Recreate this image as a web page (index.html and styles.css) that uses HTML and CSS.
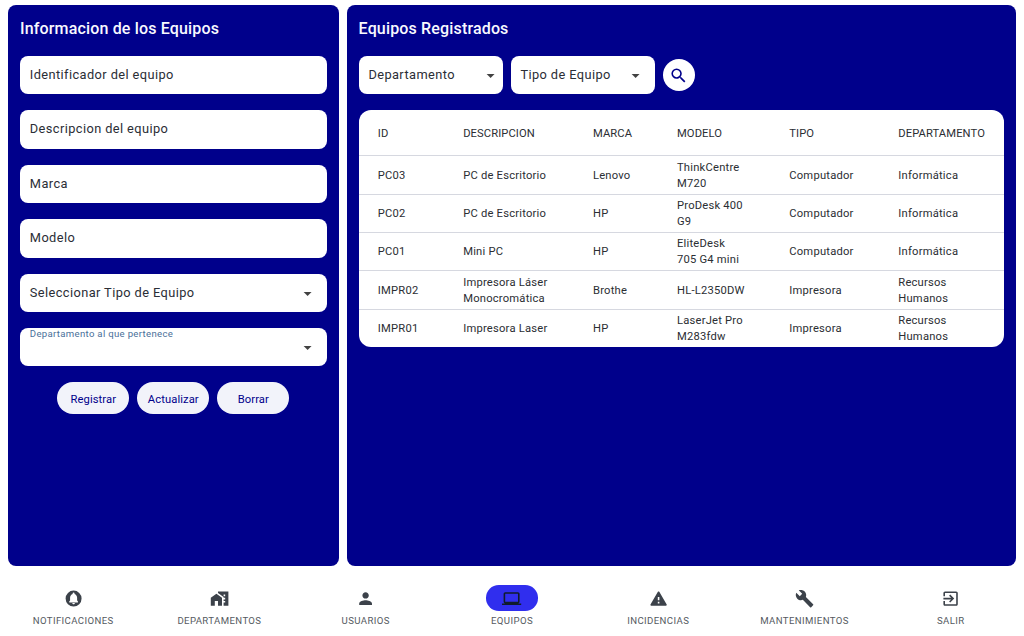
FILE: index.html
```html
<!DOCTYPE html>
<html lang="es">
<head>
<meta charset="utf-8">
<title>Equipos</title>
<link rel="stylesheet" href="styles.css">
</head>
<body>
<main class="panels">
  <section class="panel form-panel">
    <h1 class="title">Informacion de los Equipos</h1>
    <form class="form">
      <div class="field">Identificador del equipo</div>
      <div class="field">Descripcion del equipo</div>
      <div class="field">Marca</div>
      <div class="field">Modelo</div>
      <div class="field select">Seleccionar Tipo de Equipo<svg class="arrow" viewBox="0 0 24 24"><path d="M7 10l5 5 5-5z"/></svg></div>
      <div class="field select floating"><span class="float-label">Departamento al que pertenece</span><svg class="arrow" viewBox="0 0 24 24"><path d="M7 10l5 5 5-5z"/></svg></div>
      <div class="actions">
        <button type="button" class="btn">Registrar</button>
        <button type="button" class="btn">Actualizar</button>
        <button type="button" class="btn">Borrar</button>
      </div>
    </form>
  </section>
  <section class="panel list-panel">
    <h1 class="title">Equipos Registrados</h1>
    <div class="filters">
      <div class="field select filter dept">Departamento<svg class="arrow" viewBox="0 0 24 24"><path d="M7 10l5 5 5-5z"/></svg></div>
      <div class="field select filter type">Tipo de Equipo<svg class="arrow" viewBox="0 0 24 24"><path d="M7 10l5 5 5-5z"/></svg></div>
      <button type="button" class="search" aria-label="Buscar"><svg class="icon" viewBox="0 0 24 24"><path d="M15.5 14h-.79l-.28-.27A6.47 6.47 0 0 0 16 9.5 6.5 6.5 0 1 0 9.5 16c1.61 0 3.09-.59 4.23-1.57l.27.28v.79l5 4.99L20.49 19l-4.99-5zm-6 0C7.01 14 5 11.99 5 9.5S7.01 5 9.5 5 14 7.01 14 9.5 11.99 14 9.5 14z"/></svg></button>
    </div>
    <div class="table">
      <div class="row head"><span>ID</span><span>DESCRIPCION</span><span>MARCA</span><span>MODELO</span><span>TIPO</span><span>DEPARTAMENTO</span></div>
      <div class="row"><span>PC03</span><span>PC de Escritorio</span><span>Lenovo</span><span>ThinkCentre<br>M720</span><span>Computador</span><span>Informática</span></div>
      <div class="row"><span>PC02</span><span>PC de Escritorio</span><span>HP</span><span>ProDesk 400<br>G9</span><span>Computador</span><span>Informática</span></div>
      <div class="row"><span>PC01</span><span>Mini PC</span><span>HP</span><span>EliteDesk<br>705 G4 mini</span><span>Computador</span><span>Informática</span></div>
      <div class="row"><span>IMPR02</span><span>Impresora Láser<br>Monocromática</span><span>Brothe</span><span>HL-L2350DW</span><span>Impresora</span><span>Recursos<br>Humanos</span></div>
      <div class="row"><span>IMPR01</span><span>Impresora Laser</span><span>HP</span><span>LaserJet Pro<br>M283fdw</span><span>Impresora</span><span>Recursos<br>Humanos</span></div>
    </div>
  </section>
</main>
<nav class="nav">
  <a class="nav-item"><span class="pill"><svg class="icon" viewBox="0 0 24 24"><path fill-rule="evenodd" d="M12 2a10 10 0 1 0 0 20 10 10 0 0 0 0-20zM12 19.2c-.9 0-1.6-.7-1.6-1.6h3.2c0 .9-.7 1.6-1.6 1.6zM6.6 17v-1.6l1-1V11c0-2.5 1.3-4.3 3.2-4.9V5.5c0-.7.5-1.2 1.2-1.2s1.2.5 1.2 1.2v.6c1.9.6 3.2 2.4 3.2 4.9v3.4l1 1V17z"/></svg></span>NOTIFICACIONES</a>
  <a class="nav-item"><span class="pill"><svg class="icon" viewBox="0 0 24 24"><path d="M1 11v10h5v-6h4v6h5V11L8 6z"/><path d="M10 3v1.97l7 5V11h2v2h-2v2h2v2h-2v4h6V3H10zm9 6h-2V7h2v2z"/></svg></span>DEPARTAMENTOS</a>
  <a class="nav-item"><span class="pill"><svg class="icon" viewBox="0 0 24 24"><path d="M12 12c2.21 0 4-1.79 4-4s-1.79-4-4-4-4 1.79-4 4 1.79 4 4 4zm0 2c-2.67 0-8 1.34-8 4v2h16v-2c0-2.66-5.33-4-8-4z"/></svg></span>USUARIOS</a>
  <a class="nav-item active"><span class="pill"><svg class="icon" viewBox="0 0 24 24"><path d="M20 18c1.1 0 1.99-.9 1.99-2L22 6c0-1.1-.9-2-2-2H4c-1.1 0-2 .9-2 2v10c0 1.1.9 2 2 2H0v2h24v-2h-4zM4 6h16v10H4V6z"/></svg></span>EQUIPOS</a>
  <a class="nav-item"><span class="pill"><svg class="icon" viewBox="0 0 24 24"><path d="M2.73 21h18.53c.77 0 1.25-.83.87-1.5l-9.27-16c-.39-.67-1.35-.67-1.73 0l-9.27 16c-.38.67.1 1.5.87 1.5zM13 18h-2v-2h2v2zm0-4h-2v-4h2v4z"/></svg></span>INCIDENCIAS</a>
  <a class="nav-item"><span class="pill"><svg class="icon" viewBox="0 0 24 24"><path d="M22.7 19l-9.1-9.1c.9-2.3.4-5-1.5-6.9-2-2-5-2.4-7.4-1.3L9 6 6 9 1.6 4.7C.4 7.1.9 10.1 2.9 12.1c1.9 1.9 4.6 2.4 6.9 1.5l9.1 9.1c.4.4 1 .4 1.4 0l2.3-2.3c.5-.4.5-1.1.1-1.4z"/></svg></span>MANTENIMIENTOS</a>
  <a class="nav-item"><span class="pill"><svg class="icon" viewBox="0 0 24 24"><path d="M10.09 15.59L11.5 17l5-5-5-5-1.41 1.41L12.67 11H3v2h9.67l-2.58 2.59zM19 3H5c-1.11 0-2 .9-2 2v4h2V5h14v14H5v-4H3v4c0 1.1.89 2 2 2h14c1.1 0 2-.9 2-2V5c0-1.1-.9-2-2-2z"/></svg></span>SALIR</a>
</nav>
</body>
</html>
```
FILE: styles.css
```css
* { box-sizing: border-box; }
body {
  margin: 0;
  width: 1024px;
  height: 636px;
  overflow: hidden;
  background: #fff;
  color: #2b2e33;
  font-family: Roboto, "Liberation Sans", sans-serif;
  display: flex;
  flex-direction: column;
}
.panels {
  display: grid;
  grid-template-columns: 330.6px 1fr;
  gap: 8px;
  padding: 5px 8px 0;
  height: 566px;
}
.panel {
  background: #00008b;
  border-radius: 8px;
  padding: 12px 12px 0;
}
.title {
  margin: 0 0 16px;
  height: 23px;
  line-height: 23px;
  color: #f8f9ff;
  font-size: 16px;
  font-weight: 500;
  letter-spacing: 0.16px;
}
.form { display: flex; flex-direction: column; gap: 16px; }
.field {
  height: 38.4px;
  padding: 0 9.8px;
  border-radius: 8px;
  background: #fff;
  color: #2b2e36;
  font-size: 12.8px;
  letter-spacing: 0.41px;
  line-height: 38.8px;
  white-space: nowrap;
}
.select { display: flex; justify-content: space-between; }
.arrow { width: 19.2px; height: 19.2px; margin-top: 10px; fill: #424242; flex: none; }
.floating { position: relative; }
.floating .arrow { margin-left: auto; }
.float-label {
  position: absolute;
  left: 9.8px;
  top: 0;
  color: #4a709a;
  font-size: 9.6px;
  letter-spacing: 0.31px;
  line-height: 12px;
}
.actions { display: flex; justify-content: center; gap: 8px; }
.btn {
  width: 72px;
  height: 32px;
  padding: 2px 0 0;
  border: 0;
  border-radius: 16px;
  background: #f2f3fa;
  color: #00008b;
  font: 400 11.2px Roboto, "Liberation Sans", sans-serif;
  letter-spacing: 0.1px;
}
.filters { display: flex; align-items: center; gap: 8px; height: 38.4px; margin-bottom: 16px; }
.filter { width: 144px; }
.dept { padding-right: 2px; }
.type { padding-right: 9.6px; }
.search {
  display: grid;
  place-items: center;
  width: 32px;
  height: 32px;
  padding: 0;
  border: 0;
  border-radius: 50%;
  background: #fff;
  fill: #00008b;
}
.icon { width: 19.2px; height: 19.2px; display: block; }
.table {
  border-radius: 12px;
  background: #fff;
  overflow: hidden;
  font-size: 11.2px;
  letter-spacing: 0.22px;
  line-height: 16px;
}
.row {
  display: grid;
  grid-template-columns: 85.4px 129.8px 84px 112.3px 109px 1fr;
  align-items: center;
  height: 38.4px;
  padding: 1.6px 0 0 19.2px;
  border-top: 1px solid #d6d8e0;
  white-space: nowrap;
}
.head { height: 44.8px; border-top: 0; letter-spacing: 0.1px; }
.nav { display: flex; padding-top: 19.4px; }
.nav-item {
  flex: 1;
  display: flex;
  flex-direction: column;
  align-items: center;
  gap: 3px;
  color: #555a61;
  fill: #3c424a;
  font-size: 9.6px;
  line-height: 13px;
  letter-spacing: 0.39px;
}
.pill { display: grid; place-items: center; width: 51.2px; height: 25.6px; border-radius: 12.8px; }
.active .pill { background: #302eee; fill: #101c2b; }
```
